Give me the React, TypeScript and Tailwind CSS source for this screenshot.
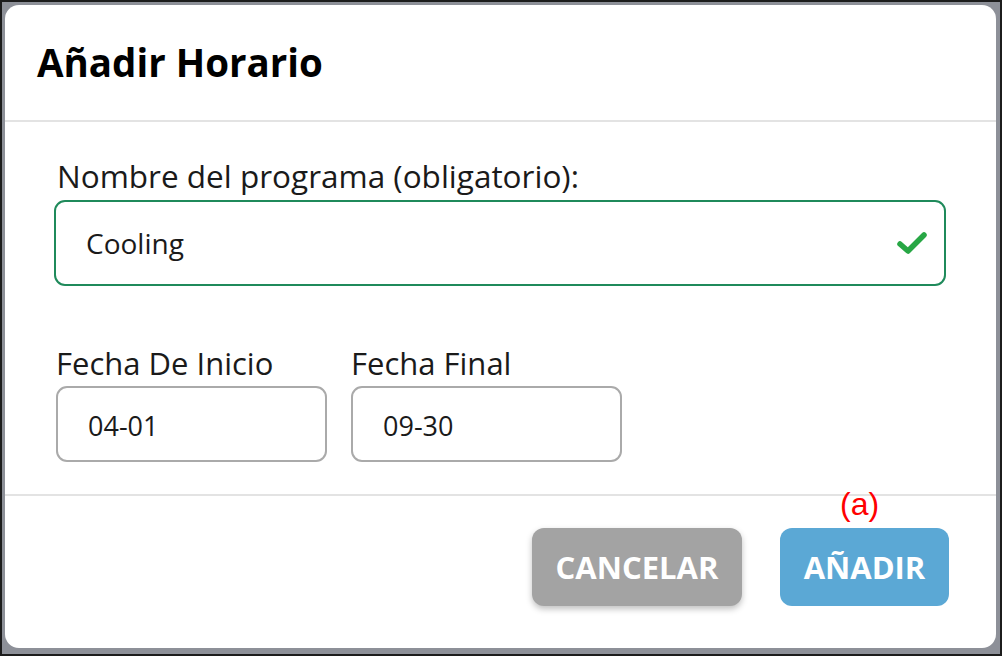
import React from 'react';

const font = { fontFamily: '"Open Sans", "Noto Sans", sans-serif' };

const CheckIcon: React.FC = () => (
  <svg width="32" height="26" viewBox="0 0 32 26" fill="none">
    <path d="M4 14 L12 21 L28 5" stroke="#28a745" strokeWidth="5.5" strokeLinecap="round" strokeLinejoin="round" />
  </svg>
);

const DateField: React.FC<{ label: string; value: string }> = ({ label, value }) => (
  <div className="flex flex-col">
    <label className="text-[31px] leading-[38px] text-[#1a1a1a] mb-[4px]">{label}</label>
    <div className="w-[271px] h-[76px] border-2 border-[#aaaaaa] rounded-[11px] flex items-center pl-[30px] pt-[4px] text-[27px] text-[#1a1a1a]">
      {value}
    </div>
  </div>
);

export default function App() {
  return (
    <div className="w-[1002px] h-[656px] bg-[#8d9098] border-2 border-[#1c1c1c] p-[3px] pb-[6px] pr-[4px]" style={font}>
      <div className="w-full h-full bg-white rounded-[14px] flex flex-col">
        {/* Header */}
        <div className="h-[117px] flex items-center pl-[32px] border-b-2 border-[#e3e3e3]">
          <h1 className="text-[38.5px] font-bold text-black">Añadir Horario</h1>
        </div>

        {/* Body */}
        <div className="px-[49px] pt-[35px] h-[374px] border-b-2 border-[#e3e3e3]">
          <label className="block text-[31.5px] leading-[38px] text-[#1a1a1a] pl-[3px] mb-[5px]">Nombre del programa (obligatorio):</label>
          <div className="w-[892px] h-[86px] border-2 border-[#1f8a5b] rounded-[11px] flex items-center justify-between pl-[30px] pr-[16px] text-[28px] text-[#1a1a1a]">
            <span>Cooling</span>
            <CheckIcon />
          </div>

          <div className="flex gap-[24px] mt-[58px] pl-[2px]">
            <DateField label="Fecha De Inicio" value="04-01" />
            <DateField label="Fecha Final" value="09-30" />
          </div>
        </div>

        {/* Footer */}
        <div className="flex-1 flex items-start justify-end pr-[47px] pt-[32px] gap-[38px]">
          <button className="w-[210px] h-[78px] rounded-[12px] bg-[#a3a3a3] text-white font-bold text-[31px] shadow-[0_3px_6px_rgba(0,0,0,0.25)]">
            CANCELAR
          </button>
          <div className="relative">
            <span
              className="absolute -top-[48px] left-[60px] text-[32px] text-[#ff0000]"
              style={{ fontFamily: '"Liberation Sans", Arial, sans-serif' }}
            >
              (a)
            </span>
            <button className="w-[169px] h-[78px] rounded-[12px] bg-[#5ba8d5] text-white font-bold text-[31px]">
              AÑADIR
            </button>
          </div>
        </div>
      </div>
    </div>
  );
}
